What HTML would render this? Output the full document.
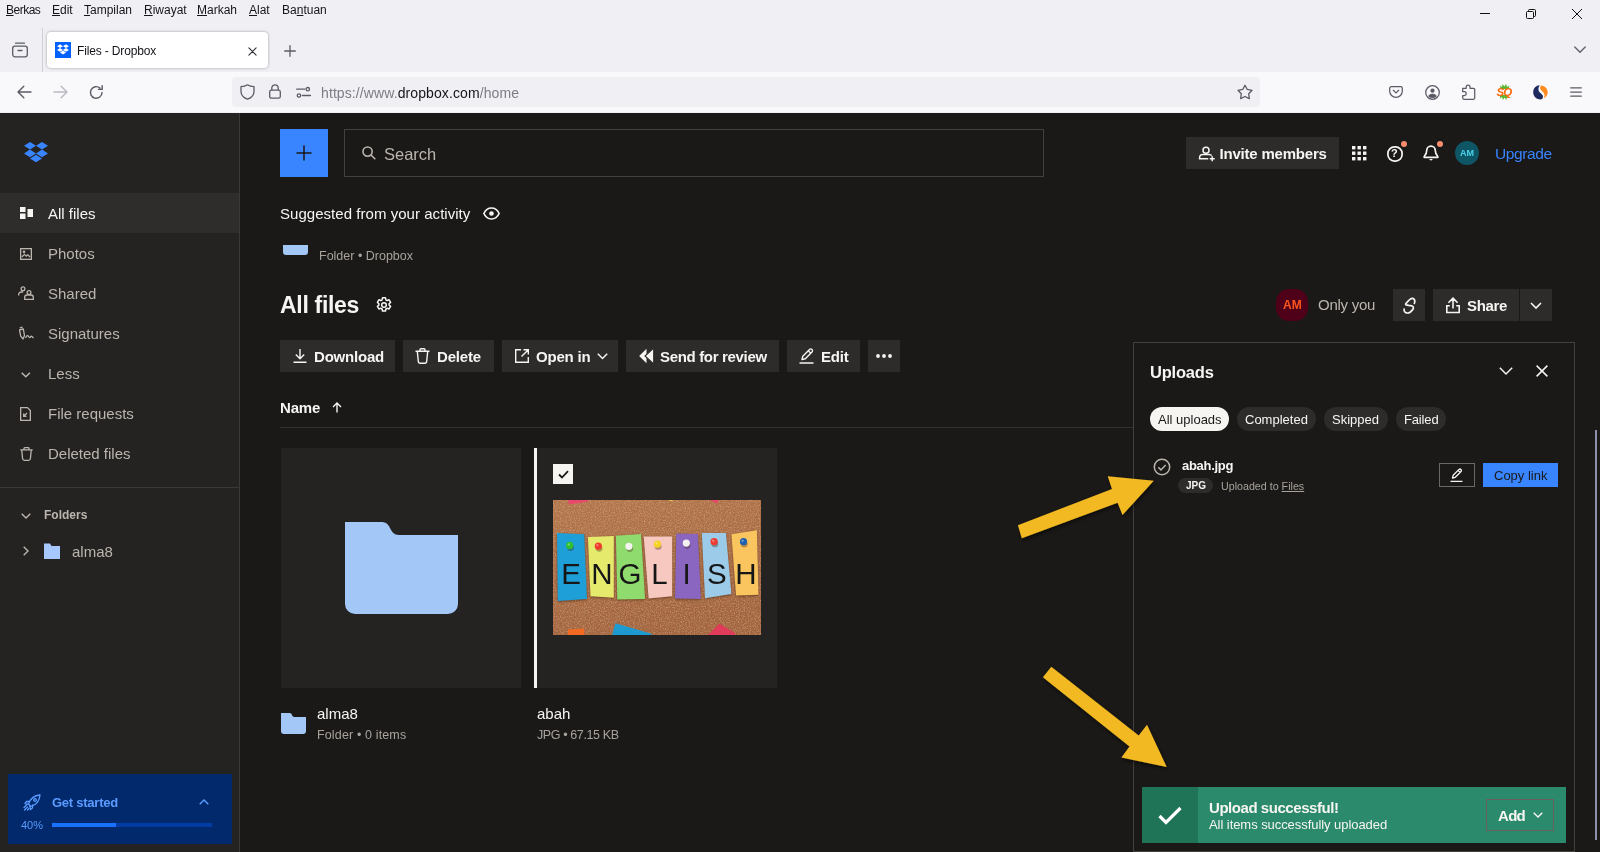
<!DOCTYPE html>
<html><head><meta charset="utf-8"><title>Files - Dropbox</title>
<style>
*{box-sizing:border-box;margin:0;padding:0}
html,body{width:1600px;height:852px;overflow:hidden;background:#1a1918;font-family:"Liberation Sans",sans-serif}
.a{position:absolute}
.t{position:absolute;white-space:nowrap;line-height:1}
svg{position:absolute;overflow:visible}
#chrome{left:0;top:0;width:1600px;height:113px;background:#f0f0f4}
#navbar{left:0;top:72px;width:1600px;height:40px;background:#f9f9fb}
#urlbar{left:232px;top:76.500px;width:1028px;height:30.500px;background:#f0f0f4;border-radius:4px}
#tab{left:47px;top:32px;width:221px;height:36px;background:#fff;border-radius:4px;box-shadow:0 0 3px rgba(0,0,0,.35)}
.menu{top:4px;font-size:12px;color:#15141a}
#side{left:0;top:113px;width:240px;height:739px;background:#242322;border-right:1px solid #3a3937}
#main{left:240px;top:113px;width:1360px;height:739px;background:#1a1918}
.nav{left:48px;font-size:15px;color:#bbb5ae}
.btn{background:#2d2c2b;height:32px}
.btn .t{font-weight:bold;font-size:15px;color:#f7f5f2;top:9px}
</style></head><body><div id="root" style="position:absolute;left:0;top:0;width:1600px;height:852px;will-change:transform">
<div class="a" id="chrome"></div>
<div class="a" id="navbar"></div>
<div class="a" id="urlbar"></div>
<div class="a" id="tab"></div>

<!-- browser chrome -->
<div class="t menu" style="left:6px;letter-spacing:-0.500px"><u>B</u>erkas</div>
<div class="t menu" style="left:52px"><u>E</u>dit</div>
<div class="t menu" style="left:84px"><u>T</u>ampilan</div>
<div class="t menu" style="left:144px"><u>R</u>iwayat</div>
<div class="t menu" style="left:197px"><u>M</u>arkah</div>
<div class="t menu" style="left:249px"><u>A</u>lat</div>
<div class="t menu" style="left:282px">Ba<u>n</u>tuan</div>
<div class="a" style="left:42px;top:28px;width:1px;height:44px;background:#cfcfd8"></div>
<svg style="left:12px;top:42px" width="16" height="16" viewBox="0 0 16 16" fill="none" stroke="#5b5b66" stroke-width="1.3"><rect x="0.7" y="4.2" width="14.6" height="10.6" rx="2.2"/><path d="M3.5 1.2h9M6 8.5h4" stroke-linecap="round"/></svg>
<div class="a" style="left:55px;top:42px;width:16px;height:16px;background:#0061fe"></div>
<svg style="left:57px;top:44px" width="12" height="11" viewBox="0 0 24 21" fill="#fff"><path d="M6 0l6 3.8-6 3.8-6-3.8zM18 0l6 3.8-6 3.8-6-3.8zM0 11.4l6-3.8 6 3.8-6 3.8zM18 7.6l6 3.8-6 3.8-6-3.8zM6 16.5l6-3.8 6 3.8-6 3.8z"/></svg>
<div class="t" style="left:77px;top:45px;font-size:12px;letter-spacing:-0.150px;color:#15141a">Files - Dropbox</div>
<svg style="left:247.500px;top:46.500px" width="9" height="9" viewBox="0 0 10 10" stroke="#2b2a33" stroke-width="1.2" stroke-linecap="round"><path d="M1 1l8 8M9 1l-8 8"/></svg>
<svg style="left:284px;top:45px" width="12" height="12" viewBox="0 0 12 12" stroke="#5b5b66" stroke-width="1.3" stroke-linecap="round"><path d="M6 0.7v10.6M0.7 6h10.6"/></svg>
<svg style="left:1574px;top:46px" width="12" height="8" viewBox="0 0 12 8" fill="none" stroke="#5b5b66" stroke-width="1.3" stroke-linecap="round" stroke-linejoin="round"><path d="M0.8 1l5.2 5.2L11.2 1"/></svg>
<!-- window controls -->
<div class="a" style="left:1480px;top:13px;width:10px;height:1px;background:#111"></div>
<svg style="left:1526px;top:9px" width="10" height="10" viewBox="0 0 10 10" fill="none" stroke="#111" stroke-width="1"><rect x="0.5" y="2.5" width="7" height="7" rx="1"/><path d="M2.5 2.5V1.5a1 1 0 0 1 1-1H8.5a1 1 0 0 1 1 1V6.5a1 1 0 0 1-1 1H7.5"/></svg>
<svg style="left:1572px;top:9px" width="10" height="10" viewBox="0 0 10 10" stroke="#111" stroke-width="1"><path d="M0 0l10 10M10 0L0 10"/></svg>
<!-- nav buttons -->
<svg style="left:17px;top:85px" width="15" height="14" viewBox="0 0 15 14" fill="none" stroke="#5b5b66" stroke-width="1.4" stroke-linecap="round" stroke-linejoin="round"><path d="M14 7H1.2M6.8 1.2L1 7l5.8 5.8"/></svg>
<svg style="left:53px;top:85px" width="15" height="14" viewBox="0 0 15 14" fill="none" stroke="#b9b9c2" stroke-width="1.4" stroke-linecap="round" stroke-linejoin="round"><path d="M1 7h12.8M8.2 1.2L14 7l-5.8 5.8"/></svg>
<svg style="left:89px;top:85px" width="15" height="15" viewBox="0 0 15 15" fill="none" stroke="#5b5b66" stroke-width="1.4" stroke-linecap="round" stroke-linejoin="round"><path d="M13 7.5a5.8 5.8 0 1 1-2-4.4M13.2 0.8v3.6H9.6"/></svg>
<!-- url bar icons -->
<svg style="left:240px;top:84px" width="15" height="16" viewBox="0 0 15 16" fill="none" stroke="#5b5b66" stroke-width="1.3" stroke-linejoin="round"><path d="M7.5 0.8C5.5 2.2 3.3 2.6 1 2.6v4.6c0 4 2.6 6.6 6.5 8 3.9-1.4 6.5-4 6.5-8V2.6c-2.300 0-4.500-.4-6.500-1.800z"/></svg>
<svg style="left:269px;top:84px" width="12" height="15" viewBox="0 0 12 15" fill="none" stroke="#5b5b66" stroke-width="1.3"><rect x="0.7" y="6.2" width="10.600" height="8" rx="1.800"/><path d="M2.800 6V4a3.200 3.200 0 0 1 6.400 0v2"/></svg>
<svg style="left:296px;top:87px" width="15" height="11" viewBox="0 0 15 11" fill="none" stroke="#5b5b66" stroke-width="1.3" stroke-linecap="round"><path d="M0.700 2.200h8M6.500 8.500h8"/><circle cx="11.800" cy="2.200" r="1.700"/><circle cx="3" cy="8.500" r="1.700"/></svg>
<div class="t" style="left:321px;top:86px;font-size:14px;letter-spacing:0.100px;color:#7d7c87">https://www.<span style="color:#15141a">dropbox.com</span>/home</div>
<svg style="left:1237px;top:84px" width="16" height="16" viewBox="0 0 16 16" fill="none" stroke="#5b5b66" stroke-width="1.300" stroke-linejoin="round"><path d="M8.00 1.20 L10.29 5.44 L15.04 6.31 L11.71 9.81 L12.35 14.59 L8.00 12.50 L3.65 14.59 L4.29 9.81 L0.96 6.31 L5.71 5.44z"/></svg>
<!-- right toolbar -->
<svg style="left:1389px;top:86px" width="14" height="12" viewBox="0 0 14 12" fill="none" stroke="#5b5b66" stroke-width="1.250" stroke-linecap="round" stroke-linejoin="round"><path d="M2.300 0.700h9.400a1.600 1.600 0 0 1 1.600 1.600v2.700a6.300 6.300 0 0 1-12.600 0V2.300A1.600 1.600 0 0 1 2.300 0.700z"/><path d="M4.300 4.300l2.700 2.600 2.700-2.600"/></svg>
<svg style="left:1425px;top:84.500px" width="15" height="15" viewBox="0 0 15 15"><defs><clipPath id="acp"><circle cx="7.500" cy="7.500" r="5.600"/></clipPath></defs><circle cx="7.500" cy="7.500" r="6.800" fill="none" stroke="#5b5b66" stroke-width="1.250"/><circle cx="7.500" cy="5.700" r="2.100" fill="#5b5b66"/><ellipse cx="7.500" cy="12.400" rx="4.600" ry="3.600" fill="#5b5b66" clip-path="url(#acp)"/></svg>
<svg style="left:1462px;top:84px" width="14" height="16" viewBox="0 0 14 16" fill="none" stroke="#5b5b66" stroke-width="1.250" stroke-linejoin="round"><path d="M0.700 4.300h3.500V2.900a1.900 1.900 0 0 1 3.800 0v1.400h3.500a1.200 1.200 0 0 1 1.200 1.200v8.600a1.200 1.200 0 0 1-1.200 1.200H1.900a1.200 1.200 0 0 1-1.200-1.200v-2.600h1.600a1.900 1.900 0 0 0 0-3.800H0.700z"/></svg>
<svg style="left:1497px;top:83px" width="15" height="18" viewBox="0 0 15 18"><polygon fill="#5cb531" points="3,2.500 5,4 5.500,1 7.500,3.500 9,0.800 10,4 12.500,2.500 11.500,6 3.500,6"/><polygon fill="#5cb531" points="3,12 11,12 12,15 10,14 9.500,17 7.500,14.500 6,17 5,14 3,15.500"/></svg>
<div class="t" style="left:1496.500px;top:86.500px;font-size:11.500px;font-weight:bold;font-style:italic;color:#f9690e;letter-spacing:-0.800px">SQ</div>
<svg style="left:1533px;top:84.500px" width="15" height="15" viewBox="0 0 15 15"><path d="M6.800 0.300C3 0.300 0.200 3.500 0.200 7.300s3 7.200 7 7.200c1.800 0 2.800-1.200 2.800-2.800 0-2.200-2.200-3.200-3.600-4.800C5 5.300 5 2.500 6.800 0.300z" fill="#1e2a5e"/><path d="M8.200 0.400C6.800 1.600 6.800 3.600 8 5c1.400 1.600 3.600 2.800 3.600 5.600 0 1.200-.4 2.200-1.200 3 2.600-1.200 4.300-3.700 4.300-6.400 0-3.700-2.900-6.500-6.500-6.800z" fill="#ff8a1e"/></svg>
<svg style="left:1570px;top:87px" width="12" height="10" viewBox="0 0 12 10" stroke="#5b5b66" stroke-width="1.250" stroke-linecap="round"><path d="M0.700 0.800h10.600M0.700 5h10.600M0.700 9.200h10.600"/></svg>
<div class="a" id="side"></div>
<div class="a" id="main"></div>
<!-- sidebar -->
<svg style="left:24px;top:142px" width="24" height="21" viewBox="0 0 24 21" fill="#3984ff"><path d="M6 0l6 3.800-6 3.800-6-3.800zM18 0l6 3.800-6 3.800-6-3.800zM0 11.400l6-3.800 6 3.800-6 3.800zM18 7.600l6 3.800-6 3.800-6-3.800zM6 16.500l6-3.800 6 3.800-6 3.800z"/></svg>
<div class="a" style="left:0;top:193px;width:239px;height:40px;background:#2e2d2b"></div>
<svg style="left:20px;top:207px" width="13" height="12" viewBox="0 0 13 12" fill="#f7f5f2"><rect x="0" y="0" width="5.500" height="5"/><rect x="0" y="6.500" width="5.500" height="5.500"/><rect x="7.500" y="2" width="5.500" height="8"/></svg>
<div class="t nav" style="top:206px;color:#f7f5f2">All files</div>
<svg style="left:20px;top:247.500px" width="12" height="12" viewBox="0 0 12 12" fill="none" stroke="#bbb5ae" stroke-width="1.300"><rect x="0.650" y="0.650" width="10.700" height="10.700"/><path d="M1.800 9l2.700-2.700 1.800 1.800 1.500-1.300 2.200 2.200"/><circle cx="4" cy="3.800" r="0.700" fill="#bbb5ae"/></svg>
<div class="t nav" style="top:246px">Photos</div>
<svg style="left:18px;top:286px" width="17" height="14" viewBox="0 0 17 14" fill="none" stroke="#bbb5ae" stroke-width="1.300"><circle cx="5" cy="2.800" r="1.900"/><path d="M0.700 9.500V8.500a2.500 2.500 0 0 1 2.500-2.500h2"/><path d="M6.700 13.300v-2a2.300 2.300 0 0 1 2.300-2.300h4a2.300 2.300 0 0 1 2.300 2.300v2z"/><circle cx="11" cy="6.500" r="1.900"/></svg>
<div class="t nav" style="top:286px">Shared</div>
<svg style="left:18px;top:326px" width="17" height="14" viewBox="0 0 17 14" fill="none" stroke="#bbb5ae" stroke-width="1.300" stroke-linejoin="round"><path d="M1.500 3.800l3.800-.8 1.200 6.500-1.500 3.500-2.300-2.800zM1.800 1.800l2.800-.6"/><path d="M7.500 12c1-2.300 2-3.200 2.800-1.700s1.500 1.500 2.200.500 1.500-.600 3 1.200"/></svg>
<div class="t nav" style="top:326px">Signatures</div>
<svg style="left:21px;top:372px" width="10" height="6" viewBox="0 0 10 6" fill="none" stroke="#bbb5ae" stroke-width="1.500"><path d="M0.700 0.700l4.100 4.100 4.100-4.100"/></svg>
<div class="t nav" style="top:366px">Less</div>
<svg style="left:20px;top:406.500px" width="11" height="14" viewBox="0 0 11 14" fill="none" stroke="#bbb5ae" stroke-width="1.300"><path d="M0.650 0.650h6.800l2.900 2.900v9.800H0.650z"/><path d="M7 6l-3.200 3.200M3.700 6.500v2.800h2.800"/></svg>
<div class="t nav" style="top:406px">File requests</div>
<svg style="left:19.500px;top:447px" width="13" height="14" viewBox="0 0 13 14" fill="none" stroke="#bbb5ae" stroke-width="1.300"><path d="M0.300 2.800h12.400M4 2.800V1.500a.800.800 0 0 1 .8-.8h3.400a.800.800 0 0 1 .8.800v1.300M1.700 2.800l.9 8.700a2 2 0 0 0 2 1.800h3.800a2 2 0 0 0 2-1.800l.9-8.700"/></svg>
<div class="t nav" style="top:446px">Deleted files</div>
<div class="a" style="left:0;top:487px;width:239px;height:1px;background:#3a3937"></div>
<svg style="left:21px;top:513px" width="10" height="6" viewBox="0 0 10 6" fill="none" stroke="#bbb5ae" stroke-width="1.400"><path d="M0.700 0.700l4.300 4.300 4.300-4.300"/></svg>
<div class="t" style="left:44px;top:509px;font-size:12px;font-weight:bold;color:#bbb5ae">Folders</div>
<svg style="left:23px;top:546px" width="6" height="10" viewBox="0 0 6 10" fill="none" stroke="#bbb5ae" stroke-width="1.400"><path d="M0.700 0.700l4.300 4.300-4.300 4.300"/></svg>
<svg style="left:44px;top:543px" width="16" height="16" viewBox="0 0 16 16" fill="#a6c8ff"><path d="M0 0.500h6l1.500 2.500H16V16H0z"/></svg>
<div class="t nav" style="left:72px;top:544px">alma8</div>
<div class="a" style="left:8px;top:774px;width:224px;height:70px;background:#01296b"></div>
<div class="t" style="left:52px;top:796px;font-size:13px;letter-spacing:-0.250px;font-weight:bold;color:#5b9bff">Get started</div>
<svg style="left:198.500px;top:798.500px" width="10" height="6" viewBox="0 0 10 6" fill="none" stroke="#5b9bff" stroke-width="1.400"><path d="M0.700 5.300l4.300-4.300 4.300 4.300"/></svg>
<div class="t" style="left:21px;top:820px;font-size:11px;color:#5b9bff">40%</div>
<div class="a" style="left:52px;top:823px;width:160px;height:4px;background:#003ca3"></div>
<div class="a" style="left:52px;top:823px;width:64px;height:4px;background:#1a70ff"></div>
<svg style="left:23px;top:793.500px" width="18" height="17" viewBox="0 0 18 17" fill="none" stroke="#5b9bff" stroke-width="1.300" stroke-linejoin="round" stroke-linecap="round"><path d="M7 11.500L5.500 10C7 5.500 10.500 1.500 17 1c-.500 6.500-4.500 10-9 11.500z"/><path d="M6.500 7.500H3.500L2 9.500l3 .800M9.500 11v3l-2 1.500-.800-3.200"/><circle cx="12" cy="6" r="1.300"/><path d="M1 13.500l2.500-2.500M1.500 16l3-3M4.500 16l1.500-1.500"/></svg>


<!-- main top -->
<div class="a" style="left:280px;top:129px;width:48px;height:48px;background:#3984ff"></div>
<svg style="left:296px;top:145px" width="16" height="16" viewBox="0 0 16 16" stroke="#1a1918" stroke-width="1.500"><path d="M8 0.500v15M0.500 8h15"/></svg>
<div class="a" style="left:344px;top:129px;width:700px;height:48px;border:1px solid #42403d"></div>
<svg style="left:362px;top:146px" width="14" height="14" viewBox="0 0 14 14" fill="none" stroke="#bbb5ae" stroke-width="1.600"><circle cx="5.600" cy="5.600" r="4.600"/><path d="M9 9l4.300 4.300"/></svg>
<div class="t" style="left:384px;top:146px;font-size:16.500px;color:#bbb5ae">Search</div>
<div class="a btn" style="left:1186px;top:137px;width:153px"><div class="t" style="left:33.500px;letter-spacing:-0.200px">Invite members</div></div>
<svg style="left:1198px;top:145px" width="17" height="17" viewBox="0 0 17 17" fill="none" stroke="#f7f5f2" stroke-width="1.500"><circle cx="8" cy="5.200" r="3"/><path d="M1.600 13.700V12.400a3 3 0 0 1 3-3h6.600a3 3 0 0 1 2.500 1.300M0.850 13.700H10.200M14.200 11.300v5M11.700 13.800h5"/></svg>
<svg style="left:1352px;top:146px" width="15" height="15" viewBox="0 0 15 15" fill="#f7f5f2"><rect x="0" y="0" width="3.400" height="3.400"/><rect x="5.500" y="0" width="3.400" height="3.400"/><rect x="11" y="0" width="3.400" height="3.400"/><rect x="0" y="5.500" width="3.400" height="3.400"/><rect x="5.500" y="5.500" width="3.400" height="3.400"/><rect x="11" y="5.500" width="3.400" height="3.400"/><rect x="0" y="11" width="3.400" height="3.400"/><rect x="5.500" y="11" width="3.400" height="3.400"/><rect x="11" y="11" width="3.400" height="3.400"/></svg>
<svg style="left:1386.500px;top:145.500px" width="16" height="16" viewBox="0 0 16 16" fill="none" stroke="#f7f5f2" stroke-width="1.700"><rect x="0.900" y="0.900" width="14.200" height="14.200" rx="6.500"/></svg>
<div class="t" style="left:1391px;top:148px;font-size:11px;font-weight:bold;color:#f7f5f2">?</div>
<div class="a" style="left:1401px;top:141px;width:6px;height:6px;border-radius:3px;background:#fa8c6e"></div>
<svg style="left:1423px;top:145px" width="16" height="17" viewBox="0 0 16 17" fill="none" stroke="#f7f5f2" stroke-width="1.700" stroke-linejoin="round"><path d="M8 1.200a4.300 4.300 0 0 0-4.300 4.300c0 3-.800 4.300-2.500 6v.800h13.600v-.800c-1.700-1.700-2.500-3-2.500-6A4.300 4.300 0 0 0 8 1.200z"/><path d="M6 14l2 1.800 2-1.800z" fill="#f7f5f2" stroke="none"/></svg>
<div class="a" style="left:1437px;top:141px;width:6px;height:6px;border-radius:3px;background:#fa8c6e"></div>
<div class="a" style="left:1455px;top:141px;width:24px;height:24px;border-radius:12px;background:#0e5566"></div>
<div class="t" style="left:1460px;top:149px;font-size:9px;font-weight:bold;color:#4dd4ea">AM</div>
<div class="t" style="left:1495px;top:146px;font-size:15.500px;letter-spacing:-0.400px;color:#3984ff">Upgrade</div>
<!-- suggested -->
<div class="t" style="left:280px;top:205.500px;font-size:15px;letter-spacing:0.040px;color:#f7f5f2">Suggested from your activity</div>
<svg style="left:483px;top:207px" width="17" height="13" viewBox="0 0 17 13" fill="none" stroke="#f7f5f2" stroke-width="1.700"><path d="M0.900 6.500C2.500 3 5.300 1 8.500 1s6 2 7.600 5.500C14.500 10 11.700 12 8.500 12S2.500 10 .9 6.500z"/><circle cx="8.500" cy="6.500" r="2.300" fill="#f7f5f2" stroke="none"/></svg>
<div class="a" style="left:283px;top:245px;width:25px;height:10px;background:#a3c7f7;border-radius:0 0 3px 3px"></div>
<div class="t" style="left:319px;top:250px;font-size:12.500px;color:#a8a29b">Folder &#8226; Dropbox</div>
<div class="t" style="left:280px;top:294px;font-size:23px;font-weight:bold;color:#f7f5f2;letter-spacing:-0.300px">All files</div>
<svg style="left:376px;top:297px" width="16" height="16" viewBox="0 0 16 16" fill="none" stroke="#f7f5f2" stroke-width="1.500" stroke-linejoin="round"><path d="M6.500 0.800h3l.4 2 1.300.7 1.900-.7 1.500 2.600-1.500 1.300v1.400l1.500 1.300-1.500 2.600-1.900-.7-1.300.7-.4 2h-3l-.4-2-1.300-.7-1.900.7-1.500-2.600 1.500-1.300V6.700L1.400 5.400l1.500-2.600 1.900.7 1.300-.7z"/><circle cx="8" cy="8" r="2.300"/></svg>
<div class="a" style="left:1276px;top:289px;width:32px;height:32px;border-radius:13px;background:#4e0119"></div>
<div class="t" style="left:1283px;top:299px;font-size:12px;font-weight:bold;color:#fa551e">AM</div>
<div class="t" style="left:1318px;top:297px;font-size:15px;letter-spacing:-0.250px;color:#bbb5ae">Only you</div>
<div class="a btn" style="left:1393px;top:289px;width:32px"></div>
<svg style="left:1402.500px;top:296.500px" width="13" height="17" viewBox="0 0 13 17" fill="none" stroke="#f7f5f2" stroke-width="1.700" stroke-linecap="round"><path d="M11.40 6.30 C11.47 5.95 11.87 4.90 11.80 4.20 C11.73 3.50 11.43 2.57 11.00 2.10 C10.57 1.63 9.87 1.35 9.20 1.40 C8.53 1.45 7.77 1.85 7.00 2.40 C6.23 2.95 5.30 4.00 4.60 4.70 C3.90 5.40 3.08 6.08 2.80 6.60 C2.52 7.12 2.60 7.53 2.90 7.80 C3.20 8.07 3.95 8.07 4.60 8.20 C5.25 8.33 6.07 8.47 6.80 8.60 C7.53 8.73 8.43 8.77 9.00 9.00 C9.57 9.23 10.00 9.57 10.20 10.00 C10.40 10.43 10.40 11.03 10.20 11.60 C10.00 12.17 9.53 12.80 9.00 13.40 C8.47 14.00 7.70 14.77 7.00 15.20 C6.30 15.63 5.53 15.93 4.80 16.00 C4.07 16.07 3.18 15.93 2.60 15.60 C2.02 15.27 1.55 14.57 1.30 14.00 C1.05 13.43 1.13 12.50 1.10 12.20"/></svg>
<div class="a btn" style="left:1433px;top:289px;width:86px"><div class="t" style="left:34px;top:9px;font-size:15px;letter-spacing:-0.350px">Share</div></div>
<svg style="left:1446px;top:297px" width="14" height="17" viewBox="0 0 14 17" fill="none" stroke="#f7f5f2" stroke-width="1.600"><path d="M7 11.600V1.200M2.400 5.800L7 1.200l4.600 4.600M3.800 8.800H0.800v6.700h12.400V8.800H10.200"/></svg>
<div class="a btn" style="left:1520px;top:289px;width:32px"></div>
<svg style="left:1530px;top:302px" width="12" height="7" viewBox="0 0 12 7" fill="none" stroke="#f7f5f2" stroke-width="1.600"><path d="M1 1l5 5 5-5"/></svg>

<!-- toolbar -->
<div class="a btn" style="left:280px;top:340px;width:115px"><div class="t" style="left:34px;letter-spacing:-0.200px">Download</div></div>
<svg style="left:293px;top:349px" width="14" height="14" viewBox="0 0 14 14" fill="none" stroke="#f7f5f2" stroke-width="1.400"><path d="M7 0v9.500M2.800 5.500L7 9.700l4.200-4.200M0.500 13.300h13"/></svg>
<div class="a btn" style="left:403px;top:340px;width:91px"><div class="t" style="left:34px;letter-spacing:-0.200px">Delete</div></div>
<svg style="left:415px;top:348px" width="15" height="16" viewBox="0 0 15 16" fill="none" stroke="#f7f5f2" stroke-width="1.400"><path d="M0.500 3.300h14M5 3.300V1.700a1 1 0 0 1 1-1h3a1 1 0 0 1 1 1v1.600M2.300 3.300l1 10a2 2 0 0 0 2 1.900h4.400a2 2 0 0 0 2-1.900l1-10"/></svg>
<div class="a btn" style="left:502px;top:340px;width:116px"><div class="t" style="left:34px;letter-spacing:-0.200px">Open in</div></div>
<svg style="left:515px;top:349px" width="14" height="14" viewBox="0 0 14 14" fill="none" stroke="#f7f5f2" stroke-width="1.400"><path d="M6 0.700H0.700v12.600h12.600V8M8.500 0.700h4.800v4.800M13.300 0.700L6.500 7.500"/></svg>
<svg style="left:597px;top:353px" width="11" height="7" viewBox="0 0 11 7" fill="none" stroke="#f7f5f2" stroke-width="1.500"><path d="M0.800 0.800l4.700 4.700 4.700-4.700"/></svg>
<div class="a btn" style="left:626px;top:340px;width:153px"><div class="t" style="left:34px;letter-spacing:-0.330px">Send for review</div></div>
<svg style="left:638.500px;top:348px" width="15" height="16" viewBox="0 0 15 16" fill="#f7f5f2"><path d="M7.500 0.800v14.400L0.200 8z"/><path d="M14.700 0v16L6 8z" stroke="#2d2c2b" stroke-width="1.100"/></svg>
<div class="a btn" style="left:787px;top:340px;width:73px"><div class="t" style="left:34px;letter-spacing:-0.200px">Edit</div></div>
<svg style="left:799px;top:348px" width="16" height="16" viewBox="0 0 16 16" fill="none" stroke="#f7f5f2" stroke-width="1.400" stroke-linejoin="round"><path d="M3 11.500l.8-3.300L10.500 1.500a1.700 1.700 0 0 1 2.500 2.500L6.300 10.700zM9.300 2.700l2.500 2.500M0.500 15h14"/></svg>
<div class="a btn" style="left:868px;top:340px;width:32px"></div>
<svg style="left:876px;top:354px" width="16" height="4" viewBox="0 0 16 4" fill="#f7f5f2"><circle cx="2" cy="2" r="1.900"/><circle cx="8" cy="2" r="1.900"/><circle cx="14" cy="2" r="1.900"/></svg>
<div class="t" style="left:280px;top:400px;font-size:15px;font-weight:bold;color:#f7f5f2;letter-spacing:-0.200px">Name</div>
<svg style="left:332px;top:402px" width="10" height="11" viewBox="0 0 10 11" fill="none" stroke="#f7f5f2" stroke-width="1.400"><path d="M5 10.500V1.200M1 5L5 1l4 4"/></svg>
<div class="a" style="left:280px;top:427px;width:854px;height:1px;background:#33312f"></div>
<!-- cards -->
<div class="a" style="left:281px;top:448px;width:240px;height:240px;background:#242322"></div>
<svg style="left:345px;top:522px" width="113" height="92" viewBox="0 0 113 92" fill="#a3c7f7"><path d="M0 0H36c5 0 7 2 9 6s4 7 9 7h59V82a10 10 0 0 1-10 10H10A10 10 0 0 1 0 82z"/></svg>
<svg style="left:281px;top:713px" width="25" height="21" viewBox="0 0 25 21" fill="#a3c7f7"><path d="M0 0H8.500c1.500 0 2 .8 2.500 2s1 2 2.500 2H25V18a3 3 0 0 1-3 3H3a3 3 0 0 1-3-3z"/></svg>
<div class="t" style="left:317px;top:706px;font-size:15px;color:#f7f5f2">alma8</div>
<div class="t" style="left:317px;top:729px;font-size:12.500px;letter-spacing:0.140px;color:#a8a29b">Folder &#8226; 0 items</div>
<div class="a" style="left:534px;top:448px;width:3px;height:240px;background:#f7f5f2"></div>
<div class="a" style="left:537px;top:448px;width:240px;height:240px;background:#242322"></div>
<div class="a" style="left:553px;top:464px;width:20px;height:20px;background:#f7f5f2"></div>
<svg style="left:558px;top:470px" width="11" height="9" viewBox="0 0 11 9" fill="none" stroke="#1a1918" stroke-width="1.800"><path d="M1 4.500l3 3L10 1.200"/></svg>
<div class="t" style="left:537px;top:706px;font-size:15px;color:#f7f5f2">abah</div>
<div class="t" style="left:537px;top:729px;font-size:12.500px;letter-spacing:-0.390px;color:#a8a29b">JPG &#8226; 67.15 KB</div>
<svg style="left:553px;top:500px;overflow:hidden" width="208" height="135" viewBox="0 0 208 135"><defs><filter id="ck" x="0" y="0" width="100%" height="100%"><feTurbulence type="fractalNoise" baseFrequency="0.85" numOctaves="2" seed="3"/><feColorMatrix values="0 0 0 0 0.36  0 0 0 0 0.18  0 0 0 0 0.08  2.600 0 0 0 -1.050"/></filter><filter id="ck2" x="0" y="0" width="100%" height="100%"><feTurbulence type="fractalNoise" baseFrequency="0.8" numOctaves="2" seed="11"/><feColorMatrix values="0 0 0 0 0.86  0 0 0 0 0.62  0 0 0 0 0.42  0 2.600 0 0 -1.100"/></filter><linearGradient id="cg" x1="0" y1="0" x2="0.300" y2="1"><stop offset="0" stop-color="#b5754a"/><stop offset="1" stop-color="#a1613b"/></linearGradient></defs><rect width="208" height="135" fill="url(#cg)"/><rect width="208" height="135" filter="url(#ck)" opacity="0.500"/><rect width="208" height="135" filter="url(#ck2)" opacity="0.400"/><polygon fill="#e8486a" points="15,0 36,0 34,1.800 16,4.400"/><polygon fill="#e8486a" points="156.700,0 165.500,0 164.600,3.500"/><polygon fill="#e5d94a" points="115,0 121,0 118,1"/><polygon fill="#f26a21" points="15,129.400 31.200,128.500 31.200,135 15,135"/><polygon fill="#1d9bd0" points="62.500,123.300 98.600,133.800 98.600,135 59,135"/><polygon fill="#e23a5a" points="166.400,123.800 182.200,132.900 182.200,135 155,135"/><g style="filter:drop-shadow(0.500px 1px 1px rgba(60,25,5,0.550))"><polygon fill="#1e9fd8" points="4.0,32.9 31.2,34.3 34.0,99.0 4.8,100.9"/><polygon fill="#e6ea6c" points="34.9,37.0 60.8,36.1 60.8,97.7 37.5,96.3"/><polygon fill="#8fdb6e" points="62.9,35.7 88.0,34.0 92.1,99.0 64.3,99.5"/><polygon fill="#f7c8c0" points="90.7,36.4 119.2,36.4 119.2,96.3 95.6,98.6"/><polygon fill="#8b66c1" points="123.3,33.5 144.9,34.0 147.9,99.0 122.0,98.6"/><polygon fill="#9ccbe9" points="148.8,32.9 172.9,32.9 178.4,93.9 152.0,98.3"/><polygon fill="#fac55e" points="178.4,34.3 203.9,30.3 205.5,94.7 183.1,95.6"/></g><circle cx="17.5" cy="47.6" r="3.400" fill="#3a1a08" opacity="0.350"/><circle cx="16.7" cy="45.4" r="3.600" fill="#2fc02f"/><circle cx="15.8" cy="44.4" r="1.200" fill="#fff" opacity="0.350"/><circle cx="46.1" cy="48.3" r="3.400" fill="#3a1a08" opacity="0.350"/><circle cx="45.3" cy="46.1" r="3.600" fill="#f0392b"/><circle cx="44.4" cy="45.1" r="1.200" fill="#fff" opacity="0.350"/><circle cx="76.7" cy="48.5" r="3.400" fill="#3a1a08" opacity="0.350"/><circle cx="75.9" cy="46.3" r="3.600" fill="#f2f2ee"/><circle cx="75.0" cy="45.3" r="1.200" fill="#fff" opacity="0.350"/><circle cx="105.2" cy="46.4" r="3.400" fill="#3a1a08" opacity="0.350"/><circle cx="104.4" cy="44.2" r="3.600" fill="#f5d320"/><circle cx="103.5" cy="43.2" r="1.200" fill="#fff" opacity="0.350"/><circle cx="134.1" cy="45.3" r="3.400" fill="#3a1a08" opacity="0.350"/><circle cx="133.3" cy="43.1" r="3.600" fill="#f4f2f0"/><circle cx="132.4" cy="42.1" r="1.200" fill="#fff" opacity="0.350"/><circle cx="161.9" cy="43.9" r="3.400" fill="#3a1a08" opacity="0.350"/><circle cx="161.1" cy="41.7" r="3.600" fill="#ee3a30"/><circle cx="160.2" cy="40.7" r="1.200" fill="#fff" opacity="0.350"/><circle cx="191.3" cy="43.9" r="3.400" fill="#3a1a08" opacity="0.350"/><circle cx="190.5" cy="41.7" r="3.600" fill="#1f5fb0"/><circle cx="189.6" cy="40.7" r="1.200" fill="#fff" opacity="0.350"/><text x="18.1" y="83.500" text-anchor="middle" font-family="Liberation Sans, sans-serif" font-size="29.500" fill="#161616">E</text><text x="48.8" y="83.500" text-anchor="middle" font-family="Liberation Sans, sans-serif" font-size="29.500" fill="#161616">N</text><text x="77.1" y="83.500" text-anchor="middle" font-family="Liberation Sans, sans-serif" font-size="29.500" fill="#161616">G</text><text x="106.5" y="83.500" text-anchor="middle" font-family="Liberation Sans, sans-serif" font-size="29.500" fill="#161616">L</text><text x="133.5" y="83.500" text-anchor="middle" font-family="Liberation Sans, sans-serif" font-size="29.500" fill="#161616">I</text><text x="163.8" y="83.500" text-anchor="middle" font-family="Liberation Sans, sans-serif" font-size="29.500" fill="#161616">S</text><text x="192.8" y="83.500" text-anchor="middle" font-family="Liberation Sans, sans-serif" font-size="29.500" fill="#161616">H</text></svg>

<!-- upload panel -->
<div class="a" style="left:1133px;top:342px;width:1442px;height:510px;width:442px;background:#1a1918;border:1px solid #43413e"></div>
<div class="t" style="left:1150px;top:364px;font-size:16.500px;font-weight:bold;color:#f7f5f2;letter-spacing:-0.200px">Uploads</div>
<svg style="left:1499px;top:367px" width="14" height="8" viewBox="0 0 14 8" fill="none" stroke="#f7f5f2" stroke-width="1.500"><path d="M0.800 0.800L7 7l6.200-6.200"/></svg>
<svg style="left:1536px;top:365px" width="12" height="12" viewBox="0 0 12 12" stroke="#f7f5f2" stroke-width="1.500"><path d="M0.600 0.600l10.800 10.800M11.400 0.600L0.600 11.400"/></svg>
<div class="a" style="left:1150px;top:407px;width:79px;height:24px;border-radius:12px;background:#f7f5f2"></div>
<div class="t" style="left:1158px;top:413px;font-size:13px;color:#1a1918;letter-spacing:0px">All uploads</div>
<div class="a" style="left:1237px;top:407px;width:79px;height:24px;border-radius:12px;background:#2d2c2b"></div>
<div class="t" style="left:1245px;top:413px;font-size:13px;color:#f7f5f2;letter-spacing:0px">Completed</div>
<div class="a" style="left:1324px;top:407px;width:64px;height:24px;border-radius:12px;background:#2d2c2b"></div>
<div class="t" style="left:1332px;top:413px;font-size:13px;color:#f7f5f2;letter-spacing:0px">Skipped</div>
<div class="a" style="left:1396px;top:407px;width:50px;height:24px;border-radius:12px;background:#2d2c2b"></div>
<div class="t" style="left:1404px;top:413px;font-size:13px;color:#f7f5f2;letter-spacing:-0.150px">Failed</div>
<svg style="left:1153px;top:458px" width="18" height="18" viewBox="0 0 18 18" fill="none" stroke="#bbb5ae" stroke-width="1.500"><circle cx="9" cy="9" r="7.700"/><path d="M5.300 9.300l2.600 2.600 4.800-5"/></svg>
<div class="t" style="left:1182px;top:459px;font-size:13px;font-weight:bold;color:#f7f5f2;letter-spacing:-0.300px">abah.jpg</div>
<div class="a" style="left:1178px;top:478px;width:35px;height:15px;border-radius:8px;background:#2d2c2b"></div>
<div class="t" style="left:1186px;top:481px;font-size:10px;font-weight:bold;color:#f7f5f2">JPG</div>
<div class="t" style="left:1221px;top:481px;font-size:10.700px;color:#a8a29b">Uploaded to <u>Files</u></div>
<div class="a" style="left:1439px;top:463px;width:36px;height:24px;border:1px solid #6b6762"></div>
<svg style="left:1449px;top:467px" width="16" height="16" viewBox="0 0 16 16" fill="none" stroke="#f7f5f2" stroke-width="1.300" stroke-linejoin="round"><path d="M3.500 11l.7-2.800L10 2.400a1.500 1.500 0 0 1 2.100 2.100L6.300 10.300zM9 3.400l2.100 2.100M1.500 14.300h12"/></svg>
<div class="a" style="left:1483px;top:463px;width:75px;height:24px;background:#3984ff"></div>
<div class="t" style="left:1494px;top:469px;font-size:13px;color:#1a1918">Copy link</div>
<div class="a" style="left:1595px;top:430px;width:2.300px;height:410px;background:#8c90ab"></div>
<!-- banner -->
<div class="a" style="left:1142px;top:787px;width:424px;height:56px;background:#2a8a6b"></div>
<div class="a" style="left:1142px;top:787px;width:56px;height:56px;background:#1f7356"></div>
<svg style="left:1158px;top:806px" width="24" height="19" viewBox="0 0 24 19" fill="none" stroke="#fff" stroke-width="3.200"><path d="M1.500 10l6.500 6.500L22.500 2"/></svg>
<div class="t" style="left:1209px;top:800px;font-size:15px;font-weight:bold;color:#f7f5f2;letter-spacing:-0.450px">Upload successful!</div>
<div class="t" style="left:1209px;top:818px;font-size:13px;color:#f7f5f2;letter-spacing:-0.060px">All items successfully uploaded</div>
<div class="a" style="left:1486px;top:799px;width:68px;height:32px;border:1px solid #6a605d"></div>
<div class="t" style="left:1498px;top:808px;font-size:15px;letter-spacing:-0.700px;font-weight:bold;color:#f7f5f2">Add</div>
<svg style="left:1533px;top:812px" width="10" height="6" viewBox="0 0 10 6" fill="none" stroke="#f7f5f2" stroke-width="1.400"><path d="M0.700 0.700l4.300 4.300 4.300-4.300"/></svg>
<!-- arrows -->
<svg style="left:0;top:0" width="1600" height="852" viewBox="0 0 1600 852"><defs><filter id="sh" x="-20%" y="-20%" width="140%" height="140%"><feDropShadow dx="1" dy="2" stdDeviation="2" flood-color="#000" flood-opacity="0.600"/></filter></defs>
<polygon filter="url(#sh)" fill="#f2b921" points="1017.900,525.200 1112,489 1107.700,476.300 1153.800,480.800 1122.500,515 1117.600,502.700 1021.800,538.300"/>
<polygon filter="url(#sh)" fill="#f2b921" points="1051.300,666.800 1138.700,735.400 1147,724.700 1166.700,767 1121.400,757.500 1129.500,746.400 1042.900,677.200"/>
</svg>
</div></body></html>
